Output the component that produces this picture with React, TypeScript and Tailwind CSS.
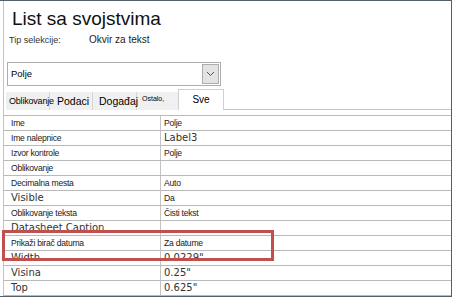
import React from 'react'

interface PropRow {
  label: string
  value?: string
  bigLabel?: boolean
  bigValue?: boolean
}

const rows: PropRow[] = [
  { label: 'Ime', value: 'Polje' },
  { label: 'Ime nalepnice', value: 'Label3', bigValue: true },
  { label: 'Izvor kontrole', value: 'Polje' },
  { label: 'Oblikovanje' },
  { label: 'Decimalna mesta', value: 'Auto' },
  { label: 'Visible', value: 'Da', bigLabel: true },
  { label: 'Oblikovanje teksta', value: 'Čisti tekst' },
  { label: 'Datasheet Caption', bigLabel: true },
  { label: 'Prikaži birač datuma', value: 'Za datume' },
  { label: 'Width', value: '0.0229"', bigLabel: true, bigValue: true },
  { label: 'Visina', value: '0.25"', bigLabel: true, bigValue: true },
  { label: 'Top', value: '0.625"', bigLabel: true, bigValue: true },
]

const small = "font-['Liberation_Sans',Arial,sans-serif] text-[8.6px] tracking-[-0.25px] text-[#1a1a1a]"
const big = "font-['DejaVu_Sans',Verdana,sans-serif] text-[10px] text-[#333]"

function Row({ label, value, bigLabel, bigValue }: PropRow) {
  return (
    <div className="flex h-[15px] border-b border-[#b9b9b9]">
      <div className={`w-[157px] border-r border-[#c4c4c4] pl-[7px] flex items-center leading-none whitespace-nowrap ${bigLabel ? big : small}`}>
        {label}
      </div>
      <div className={`flex-1 pl-[3px] flex items-center leading-none whitespace-nowrap ${bigValue ? big : small}`}>
        {value}
      </div>
    </div>
  )
}

export default function App() {
  return (
    <div className="relative w-[452px] h-[297px] overflow-hidden bg-white border-t border-r border-b border-[#51606c] font-['Liberation_Sans',Arial,sans-serif] text-black">
      <div className="ml-[3px] h-full border-l border-[#c4c4c4] flex flex-col">
        {/* Header */}
        <div className="pl-[8px] pt-[7px] h-[29px] text-[19px] leading-[22px] text-[#111]">List sa svojstvima</div>
        <div className="mt-[4px] flex h-[12px] items-center leading-none">
          <span className="pl-[5px] w-[85px] text-[9px] text-[#333]">Tip selekcije:</span>
          <span className="text-[10px] text-[#222]">Okvir za tekst</span>
        </div>

        {/* Dropdown */}
        <div className="mt-[16px] ml-[3px] w-[214px] h-[24px] border border-[#adadad] flex items-center justify-between">
          <span className="pl-[3px] text-[9.5px] leading-none">Polje</span>
          <div className="mr-[1px] w-[17px] h-[20px] bg-[#e3e3e3] border border-[#adadad] flex items-center justify-center">
            <svg width="9" height="6" viewBox="0 0 9 6" fill="none" stroke="#555" strokeWidth="1">
              <path d="M1 1l3.5 3.5L8 1" />
            </svg>
          </div>
        </div>

        {/* Tabs */}
        <div className="mt-[3px] flex h-[21px] items-end">
          <div className="ml-[2px] flex h-[18px] bg-[#f0f0f0] items-center leading-none">
            <div className="w-[44px] h-full border-r border-[#d6d6d6] pl-[3px] flex items-center text-[9px] tracking-[-0.2px] whitespace-nowrap overflow-visible">Oblikovanje</div>
            <div className="w-[43px] h-full border-r border-[#d6d6d6] pl-[7px] flex items-center text-[10.5px]">Podaci</div>
            <div className="w-[44px] h-full border-r border-[#d6d6d6] pl-[6px] flex items-center text-[10.5px]">Događaj</div>
            <div className="w-[41px] h-full pl-[5px] pt-[3px] flex items-start text-[7px]">Ostalo,</div>
          </div>
          <div className="w-[46px] h-[21px] border-l border-r border-t border-[#d0d0d0] bg-white flex items-center justify-center text-[10px] leading-none">
            Sve
          </div>
          <div className="flex-1 h-full border-b border-[#c8c8c8]"></div>
        </div>

        {/* Property grid */}
        <div className="mt-[5px] border-t border-[#b9b9b9]">
          {rows.map((r) => (
            <Row key={r.label} {...r} />
          ))}
        </div>
      </div>

      {/* Highlight */}
      <div className="absolute left-[2px] top-[229px] w-[272px] h-[31px] border-[3px] border-[#c0504d]"></div>
    </div>
  )
}
